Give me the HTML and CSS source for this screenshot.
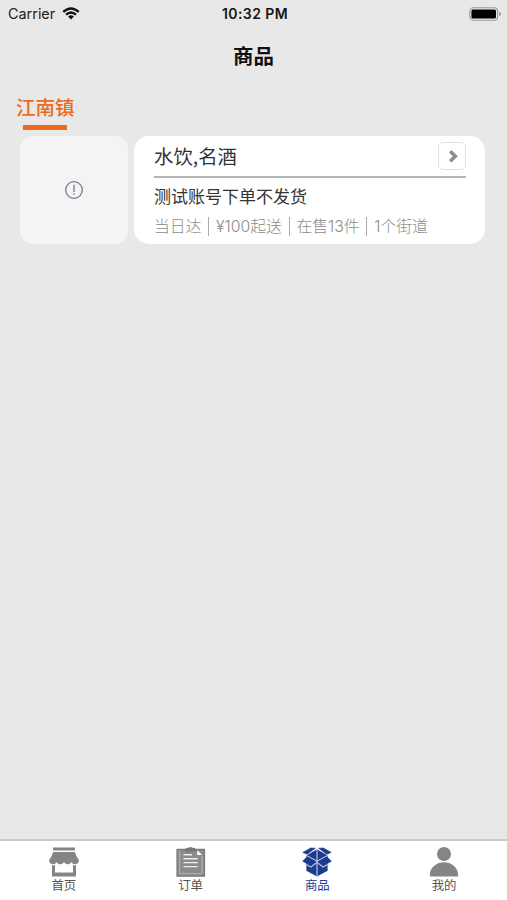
FILE: index.html
```html
<!DOCTYPE html>
<html lang="zh-CN">
<head>
<meta charset="utf-8">
<title>商品</title>
<link rel="stylesheet" href="styles.css">
</head>
<body>
<div class="app">
  <header class="status">
    <div class="carrier"><span>Carrier</span>
      <svg class="wifi" width="18" height="13" viewBox="0 0 18 13" fill="none" stroke="#111" stroke-width="2.4"><path d="M1.2 4.9Q9-2.1 16.8 4.9M4 7.7Q9 3.3 14 7.7"/><path d="M9 12.5 6.1 9.5Q9 7.1 11.9 9.5Z" fill="#111" stroke="none"/></svg>
    </div>
    <div class="clock">10:32 PM</div>
    <svg class="battery" width="33" height="14" viewBox="0 0 33 14"><rect x=".8" y=".8" width="27.8" height="12.4" rx="3.4" fill="none" stroke="#999" stroke-width="1.1"/><rect x="2.4" y="2.4" width="24.6" height="9.2" rx="1.5" fill="#000"/><path d="M30.2 4.8Q32 5.4 32 7T30.2 9.2Z" fill="#999"/></svg>
  </header>
  <h1 class="title">商品</h1>
  <nav class="towns"><a class="town">江南镇</a></nav>
  <main class="list">
    <article class="shop">
      <div class="thumb">
        <svg width="20" height="20" viewBox="0 0 20 20" fill="none" stroke="#777a7d" stroke-width="1.3"><circle cx="10" cy="10" r="8.3"/><path d="M10 4.8v7.2M10 13.3v1.5"/></svg>
      </div>
      <div class="card">
        <div class="head">
          <h2>水饮,名酒</h2>
          <div class="go"><svg width="12" height="14" viewBox="0 0 12 14" fill="none" stroke="#8e8e8e" stroke-width="3.6"><path d="M3.2 2.2 8.3 7.2 3.2 12.2"/></svg></div>
        </div>
        <p class="note">测试账号下单不发货</p>
        <p class="meta"><span>当日达</span><i></i><span>¥100起送</span><i></i><span>在售13件</span><i></i><span>1个街道</span></p>
      </div>
    </article>
  </main>
  <nav class="tabs">
    <a class="tab">
      <svg width="30" height="30" viewBox="0 0 30 30" fill="#858585"><path d="M4 .6h22v2.8H4zM4.4 5h21.2l4 8.5v1.7H.4v-1.7z"/><circle cx="4" cy="13.6" r="3.6"/><circle cx="11.3" cy="13.6" r="3.6"/><circle cx="18.7" cy="13.6" r="3.6"/><circle cx="26" cy="13.6" r="3.6"/><path d="M3 18.2h3v7.3h18v-7.3h3v11.2H3z"/></svg>
      <span>首页</span>
    </a>
    <a class="tab">
      <svg width="30" height="30" viewBox="0 0 30 30"><path d="M1 2.3h27.5v26.9H1z" fill="#8b8b8b" stroke="#777" stroke-width="1.2" stroke-linejoin="round"/><path d="M9 4.5V2.2Q10 .8 12.5.8q2-1.4 4 0 2.5 0 3.5 1.4v2.3z" fill="#777"/><path d="M3.7 3.5v23.2h22.4V9" fill="none" stroke="#b9b9b9" stroke-width=".9"/><path d="M21.2 3.2v4.9h5z" fill="#fff"/><path d="M7.5 7.7H16M7.5 11.7h14.2M7.5 15.6h14.2M7.5 19.6h14.2" stroke="#eee" stroke-width="1.4"/></svg>
      <span>订单</span>
    </a>
    <a class="tab active">
      <svg width="30" height="30" viewBox="0 0 30 30"><path d="M15 2.2 25.6 8.5v15.2L15 29.6 4.4 23.7V8.5z" fill="#1d3b8f"/><path d="M15 2v28M4 8.3l11 6 11-6" stroke="#c3cbe3" stroke-width="1.1" fill="none"/><path d="M8.6 1 13.4 1.2 5.2 7.2.8 5.4zM21.4 1l-4.8.2 8.2 6L29.2 5.4zM5 9.8l8.8 4.8-5 4.2L.6 14.2zM25 9.8l-8.8 4.8 5 4.2 8.2-4.6z" fill="#1d3b8f" stroke="#1d3b8f" stroke-width=".6" stroke-linejoin="round"/><path d="M3.4 16.9 9 20l6-4.8 6 4.8 5.6-3.1" stroke="#b5c0df" stroke-width="1.2" fill="none"/></svg>
      <span>商品</span>
    </a>
    <a class="tab">
      <svg width="30" height="30" viewBox="0 0 30 30" fill="#858585"><circle cx="15" cy="7" r="7"/><path d="M.8 28.2C.8 20 8 15.3 15 15.3s14.2 4.7 14.2 12.9q0 1.2-1 1.2H1.8q-1 0-1-1.2z"/></svg>
      <span>我的</span>
    </a>
  </nav>
</div>
</body>
</html>
```
FILE: styles.css
```css
* { box-sizing: border-box; }
body { margin: 0; font-family: "Noto Sans CJK SC", sans-serif; }
h1, h2, p { margin: 0; font-weight: 400; white-space: nowrap; }
.app { height: 900px; display: flex; flex-direction: column; background: #e8e8e8; }
.status {
  height: 27px; padding: 0 6px 0 8px;
  display: grid; grid-template-columns: 1fr auto 1fr; align-items: center;
  font: 14.4px/27px Inter, sans-serif; color: #222;
}
.carrier { display: flex; align-items: center; gap: 7px; }
.clock { font-size: 14px; letter-spacing: .4px; font-weight: 600; color: #161616; padding-left: 1px; }
.battery { justify-self: end; margin-right: -1px; }
.title { height: 58px; font-size: 20.5px; line-height: 57px; font-weight: 700; text-align: center; color: #111; }
.towns { height: 51px; padding: 7px 0 0 16px; display: flex; }
.town {
  height: 39px; display: flex; flex-direction: column; align-items: center;
  font-size: 19.5px; line-height: 29px; font-weight: 500; color: #ec6a1c;
}
.town::after { content: ""; width: 44px; height: 5px; margin-top: 4px; background: #ec6a1c; }
.list { flex: 1; padding: 0 22px 0 20px; }
.shop { display: flex; gap: 6px; height: 108px; }
.thumb { width: 108px; border-radius: 13px; background: #f2f4f6; display: flex; align-items: center; justify-content: center; }
.card { flex: 1; padding: 0 19px 0 20px; border-radius: 15px; background: #fff; }
.head { height: 42px; display: flex; align-items: center; justify-content: space-between; border-bottom: 2px solid #b5b5b5; }
h2 { font-size: 19.4px; line-height: 40px; color: #333; }
.go { width: 28px; height: 28px; border: 1.5px solid #e2e2e2; border-radius: 5px; display: flex; align-items: center; justify-content: center; }
.go svg { margin-left: 1px; }
.note { height: 34px; font-size: 17px; line-height: 35px; color: #333; }
.meta { height: 28px; display: flex; align-items: center; font: 300 15.8px/28px Inter, "Noto Sans CJK SC", sans-serif; color: #8c8c8c; }
.meta span { padding-top: 2px; }
.meta i { width: 1px; height: 19px; margin: 0 6.8px; background: #aaa; }
.tabs { height: 61px; border-top: 2px solid #cbcbcb; background: #fff; display: grid; grid-template-columns: repeat(4, 1fr); }
.tab { display: flex; flex-direction: column; align-items: center; padding: 6px 0 0 1px; font-size: 12.4px; line-height: 17px; color: #555; }
.tab svg { flex: none; }
.active { color: #1d3b8f; }
```
